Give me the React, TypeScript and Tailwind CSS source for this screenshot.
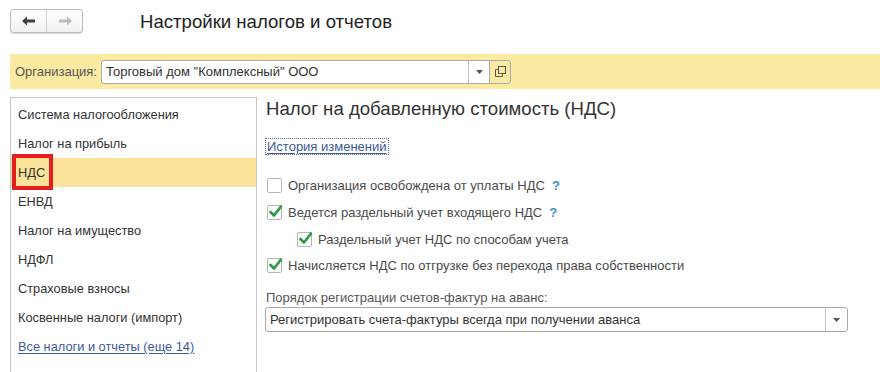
import React from 'react';

const FONT = { fontFamily: '"Liberation Sans", Arial, sans-serif' };

const NAV_ITEMS = [
  'Система налогообложения',
  'Налог на прибыль',
  'НДС',
  'ЕНВД',
  'Налог на имущество',
  'НДФЛ',
  'Страховые взносы',
  'Косвенные налоги (импорт)',
];

const Arrow = ({ dir, color }: { dir: 'left' | 'right'; color: string }) => (
  <svg width="14" height="10" viewBox="0 0 14 10" style={{ transform: dir === 'right' ? 'scaleX(-1)' : undefined }}>
    <path d="M0 5 L5 0.5 L5 3.5 L13 3.5 L13 6.5 L5 6.5 L5 9.5 Z" fill={color} />
  </svg>
);

const Caret = () => (
  <svg width="7" height="4" viewBox="0 0 7 4">
    <path d="M0 0 L7 0 L3.5 4 Z" fill="#555" />
  </svg>
);

const OpenIcon = () => (
  <svg width="11" height="11" viewBox="0 0 11 11" fill="none" stroke="#555" strokeWidth="1">
    <rect x="3.5" y="0.5" width="7" height="7" />
    <path d="M3.5 3.5 H0.5 V10.5 H7.5 V7.5" />
  </svg>
);

const Checkbox = ({ checked }: { checked?: boolean }) => (
  <span className="relative inline-block w-[15px] h-[15px] border border-[#b4b4b4] rounded-[2px] bg-white shrink-0">
    {checked && (
      <svg width="16" height="15" viewBox="0 0 16 15" className="absolute left-[0px] -top-[2px]">
        <path d="M2.5 8 L6 11.5 L13 2.5" fill="none" stroke="#2e9a48" strokeWidth="2.8" strokeLinecap="round" strokeLinejoin="round" />
      </svg>
    )}
  </span>
);

const CheckRow = ({ checked, text, help, className }: { checked?: boolean; text: string; help?: boolean; className?: string }) => (
  <div className={`flex items-center h-[16px] ${className ?? ''}`}>
    <Checkbox checked={checked} />
    <span className="ml-[6px] text-[13px] text-[#4a4a4a] leading-none">{text}</span>
    {help && <span className="ml-[7px] text-[13px] font-bold text-[#3f8fc6] leading-none">?</span>}
  </div>
);

export default function App() {
  return (
    <div className="w-[880px] h-[372px] bg-white overflow-hidden" style={FONT}>
      <div className="flex items-center pt-[9px] pl-[10px]">
        <div className="flex w-[73px] h-[24px] border border-[#bdbdbd] rounded-[3px] bg-gradient-to-b from-white to-[#f1f1f1] shadow-[0_1px_1px_rgba(0,0,0,0.15)]">
          <div className="flex-1 flex items-center justify-center border-r border-[#d0d0d0]">
            <Arrow dir="left" color="#404040" />
          </div>
          <div className="flex-1 flex items-center justify-center">
            <Arrow dir="right" color="#bcbcbc" />
          </div>
        </div>
        <h1 className="ml-[57px] pt-[2px] text-[18.6px] text-[#222] leading-none">Настройки налогов и отчетов</h1>
      </div>

      <div className="mt-[21px] ml-[10px] h-[35px] bg-[#fbeaa2] flex items-center pl-[5px]">
        <span className="text-[13px] text-[#555]">Организация:</span>
        <div className="ml-[4px] flex h-[24px] w-[410px] border border-[#a9a9a9] rounded-[3px]">
          <div className="flex-1 bg-white flex items-center pl-[4px] text-[13px] text-[#333] rounded-l-[3px]">
            Торговый дом "Комплексный" ООО
          </div>
          <div className="w-[21px] bg-white border-l border-[#c4c4c4] flex items-center justify-center">
            <Caret />
          </div>
          <div className="w-[21px] border-l border-[#a9a9a9] flex items-center justify-center">
            <OpenIcon />
          </div>
        </div>
      </div>

      <div className="flex mt-[8px] ml-[10px]">
        <div className="w-[247px] h-[290px] border border-[#c6c6c6] pt-[2px] shrink-0">
          {NAV_ITEMS.map((item) => {
            const active = item === 'НДС';
            return (
              <div
                key={item}
                className={`relative h-[29px] flex items-center pl-[7px] text-[12.8px] text-[#333] ${active ? 'bg-[#fbe49a]' : ''}`}
              >
                {active && (
                  <span className="absolute left-[1px] -top-[4px] w-[41px] h-[36px] border-[4px] border-[#e3201f]" />
                )}
                <span className="relative">{item}</span>
              </div>
            );
          })}
          <div className="h-[29px] flex items-center pl-[7px] text-[12.8px]">
            <span className="text-[#3d5a9a] underline underline-offset-2">Все налоги и отчеты (еще 14)</span>
          </div>
        </div>

        <div className="flex-1 pl-[9px]">
          <h2 className="mt-[1px] text-[18.6px] text-[#333] leading-[22px]">Налог на добавленную стоимость (НДС)</h2>
          <div className="mt-[19px] inline-block outline outline-1 outline-dotted outline-[#5a6e9a] px-[1px] leading-[15px] text-[13px] text-[#3d5a9a] underline underline-offset-2">
            История изменений
          </div>
          <CheckRow className="mt-[19px] ml-[1px]" text="Организация освобождена от уплаты НДС" help />
          <CheckRow className="mt-[11px] ml-[1px]" checked text="Ведется раздельный учет входящего НДС" help />
          <CheckRow className="mt-[11px] ml-[31px]" checked text="Раздельный учет НДС по способам учета" />
          <CheckRow className="mt-[10px] ml-[1px]" checked text="Начисляется НДС по отгрузке без перехода права собственности" />
          <div className="mt-[17px] text-[13px] text-[#555] leading-[16px]">Порядок регистрации счетов-фактур на аванс:</div>
          <div className="mt-[1px] -ml-[1px] flex h-[25px] w-[583px] border border-[#a9a9a9] rounded-[3px] bg-white">
            <div className="flex-1 flex items-center pl-[4px] text-[13px] text-[#333]">
              Регистрировать счета-фактуры всегда при получении аванса
            </div>
            <div className="w-[22px] border-l border-[#c4c4c4] flex items-center justify-center">
              <Caret />
            </div>
          </div>
        </div>
      </div>
    </div>
  );
}
